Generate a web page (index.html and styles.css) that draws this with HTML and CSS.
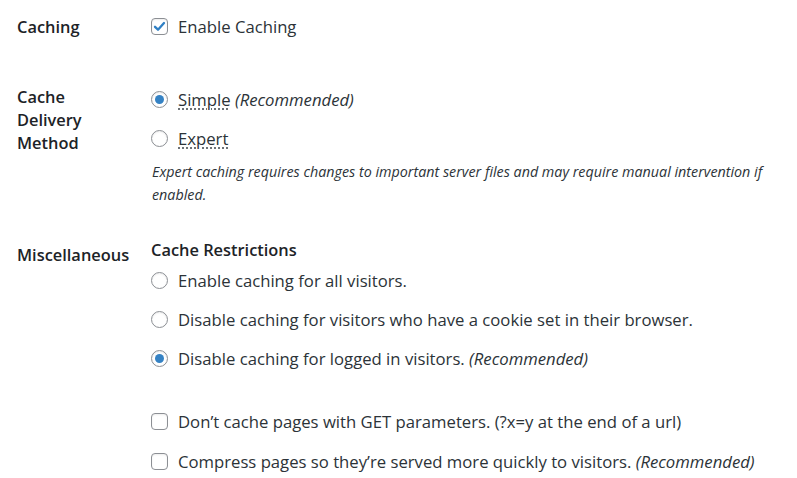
FILE: index.html
```html
<!DOCTYPE html>
<html>
<head>
<meta charset="utf-8">
<link rel="stylesheet" href="styles.css">
</head>
<body>
<div class="form">
  <div class="row row-caching">
    <div class="label">Caching</div>
    <div class="field">
      <label class="opt"><span class="box checked"><svg viewBox="0 0 17 17" width="17" height="17"><path d="M4 8.8 L7 11.7 L13 5" fill="none" stroke="#2f7fc4" stroke-width="2.3" stroke-linecap="round" stroke-linejoin="round"/></svg></span>Enable Caching</label>
    </div>
  </div>
  <div class="row row-delivery">
    <div class="label">Cache<br>Delivery<br>Method</div>
    <div class="field">
      <label class="opt"><span class="radio on"></span><span class="dotted">Simple</span>&nbsp;<em>(Recommended)</em></label>
      <label class="opt gap"><span class="radio"></span><span class="dotted">Expert</span></label>
      <p class="desc">Expert caching requires changes to important server files and may require manual intervention if enabled.</p>
    </div>
  </div>
  <div class="row row-misc">
    <div class="label misc-label">Miscellaneous</div>
    <div class="field">
      <div class="heading">Cache Restrictions</div>
      <label class="opt first"><span class="radio"></span>Enable caching for all visitors.</label>
      <label class="opt gap"><span class="radio"></span>Disable caching for visitors who have a cookie set in their browser.</label>
      <label class="opt gap"><span class="radio on"></span>Disable caching for logged in visitors.&nbsp;<em>(Recommended)</em></label>
      <label class="opt bigGap"><span class="box"></span>Don’t cache pages with GET parameters. (?x=y at the end of a url)</label>
      <label class="opt gap2"><span class="box"></span>Compress pages so they’re served more quickly to visitors.&nbsp;<em>(Recommended)</em></label>
    </div>
  </div>
</div>
</body>
</html>
```
FILE: styles.css
```css
html, body {
  margin: 0;
  padding: 0;
  background: #ffffff;
}
body {
  font-family: "Open Sans", "Noto Sans", sans-serif;
  font-size: 16.7px;
  color: #1d2327;
  line-height: 23px;
}
.form {
  padding: 15px 0 0 17px;
}
.row {
  display: grid;
  grid-template-columns: 134px 1fr;
}
.row-delivery {
  margin-top: 47px;
}
.row-delivery .field {
  padding-top: 3px;
}
.row-misc {
  margin-top: 32px;
}
.label {
  font-weight: 600;
  font-size: 16.4px;
  color: #1d2327;
}
.misc-label {
  padding-top: 5px;
}
.field {
  display: flex;
  flex-direction: column;
  align-items: flex-start;
}
.opt {
  display: flex;
  align-items: center;
  white-space: nowrap;
  color: #2c3338;
}
.opt.gap { margin-top: 16px; }
.opt.first { margin-top: 8px; }
.opt.bigGap { margin-top: 40px; }
.opt.gap2 { margin-top: 17px; }
em {
  font-style: italic;
}
.dotted {
  text-decoration: underline dotted #50575e;
  text-underline-offset: 3px;
}
.box {
  width: 17px;
  height: 17px;
  box-sizing: border-box;
  border: 1px solid #8c8f94;
  border-radius: 4px;
  margin-right: 10px;
  display: inline-flex;
  align-items: center;
  justify-content: center;
  flex: none;
  position: relative;
  box-shadow: inset 0 1px 2px rgba(0, 0, 0, 0.08);
}
.box svg {
  position: absolute;
  left: -1px;
  top: -1px;
}
.radio {
  width: 17px;
  height: 17px;
  box-sizing: border-box;
  border: 1px solid #8c8f94;
  border-radius: 50%;
  margin-right: 10px;
  display: inline-flex;
  align-items: center;
  justify-content: center;
  flex: none;
  box-shadow: inset 0 1px 2px rgba(0, 0, 0, 0.08);
}
.radio.on::after {
  content: "";
  width: 9px;
  height: 9px;
  border-radius: 50%;
  background: #3582c4;
}
.desc {
  margin: 10px 0 0 1px;
  font-style: italic;
  font-size: 14.3px;
  line-height: 23px;
  color: #2c3338;
  max-width: 640px;
}
.heading {
  font-weight: 600;
  font-size: 16.4px;
  color: #1d2327;
}
```
